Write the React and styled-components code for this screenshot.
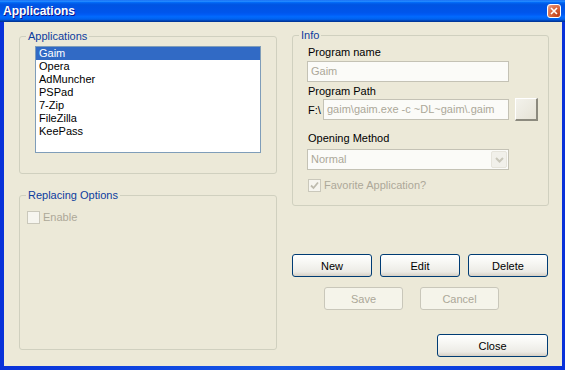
import React from "react"
import styled, { createGlobalStyle } from "styled-components"

const GlobalStyle = createGlobalStyle`
  html, body {
    margin: 0;
    padding: 0;
    background: #ECE9D8;
  }
  body {
    font-family: "Liberation Sans", Arial, sans-serif;
    font-size: 11px;
  }
  * { box-sizing: border-box; }
`

const Window = styled.div`
  width: 565px;
  height: 370px;
  display: flex;
  flex-direction: column;
  overflow: hidden;
`

const TitleBar = styled.div`
  height: 22px;
  flex: none;
  display: flex;
  align-items: center;
  justify-content: space-between;
  padding: 0 4px 0 3px;
  color: #fff;
  font-weight: bold;
  font-size: 12px;
  text-shadow: 1px 1px #0f1089;
  background: linear-gradient(to bottom, #0058ee 0%, #3593ff 4%, #288eff 6%, #127dff 8%, #036ffc 10%, #0262ee 14%, #0057e5 20%, #0054e3 24%, #0055eb 56%, #005bf5 66%, #026afe 76%, #0062ef 86%, #0052d6 92%, #0040ab 94%, #003092 100%);
`

const CloseButton = styled.div`
  width: 14px;
  height: 14px;
  border: 1px solid #fff;
  border-radius: 3px;
  display: flex;
  align-items: center;
  justify-content: center;
  background: radial-gradient(circle at 85% 85%, #c1401a 0%, #d9643a 50%, #e3876a 80%, #f3c2b0 100%);
`

const Frame = styled.div`
  flex: 1;
  display: flex;
  padding: 0 3px 4px 4px;
  background: linear-gradient(to right, #0831d9 0%, #1457e6 50%, #0831d9 100%);
`

const Client = styled.div`
  flex: 1;
  display: flex;
  gap: 15px;
  padding: 0 13px 0 15px;
  background: #ECE9D8;
`

const Column = styled.div`
  width: ${p => p.$w}px;
  padding-top: ${p => p.$top}px;
  display: flex;
  flex-direction: column;
`

const Group = styled.div`
  height: ${p => p.$h}px;
  margin-top: ${p => p.$mt || 0}px;
  border: 1px solid #D0D0BF;
  border-radius: 3px;
`

const Legend = styled.div`
  display: table;
  margin: -7px 0 -6px 6px;
  padding: 0 2px;
  line-height: 13px;
  background: #ECE9D8;
  color: #0D3C9E;
`

const GroupBody = styled.div`
  padding: ${p => p.$pad};
  display: flex;
  flex-direction: column;
  align-items: flex-start;
`

const ListBox = styled.div`
  width: 226px;
  height: 107px;
  border: 1px solid #7F9DB9;
  background: #fff;
`

const ListItem = styled.div`
  height: 13px;
  line-height: 13px;
  padding-left: 3px;
  color: ${p => (p.$selected ? "#fff" : "#000")};
  background: ${p => (p.$selected ? "#316AC5" : "transparent")};
`

const CheckRow = styled.div`
  display: flex;
  align-items: center;
  gap: 3px;
  height: 13px;
  line-height: 13px;
  margin-top: ${p => p.$mt || 0}px;
  margin-left: ${p => p.$ml || 0}px;
  color: #ACA899;
`

const CheckBox = styled.span`
  width: 13px;
  height: 13px;
  border: 1px solid #CAC8BB;
  background: #F6F5EF;
  display: flex;
  align-items: center;
  justify-content: center;
`

const Label = styled.div`
  line-height: 13px;
  margin-left: 1px;
  margin-top: ${p => p.$mt || 0}px;
  color: #000;
`

const TextBox = styled.div`
  width: ${p => p.$w}px;
  height: 21px;
  margin-top: ${p => p.$mt || 0}px;
  border: 1px solid #C4C2B5;
  background: #FBFBF8;
  color: #ACA899;
  line-height: 19px;
  padding-left: 3px;
  white-space: nowrap;
  overflow: hidden;
`

const PathRow = styled.div`
  display: flex;
  align-items: center;
  height: 23px;
`

const Prefix = styled.span`
  width: 15px;
  margin-left: 1px;
  color: #000;
`

const BrowseButton = styled.div`
  width: 23px;
  height: 23px;
  margin-left: 6px;
  border-style: solid;
  border-width: 1px 2px 2px 1px;
  border-color: #fff #8C8A7E #8C8A7E #fff;
  background: linear-gradient(135deg, #F3F2EC 0%, #E6E3D6 100%);
`

const Combo = styled.div`
  width: 202px;
  height: 21px;
  margin-top: ${p => p.$mt || 0}px;
  border: 1px solid #C4C2B5;
  background: #FBFBF8;
  display: flex;
  justify-content: space-between;
  color: #ACA899;
  line-height: 19px;
  padding: 0 1px 0 3px;
`

const ComboArrow = styled.span`
  width: 16px;
  height: 17px;
  margin-top: 1px;
  border: 1px solid #E6E4DB;
  border-radius: 2px;
  background: #F1F0EA;
  display: flex;
  align-items: center;
  justify-content: center;
`

const ButtonRow = styled.div`
  display: flex;
  gap: ${p => p.$gap}px;
  margin-top: ${p => p.$mt}px;
  padding-left: ${p => p.$pl || 0}px;
  justify-content: ${p => (p.$end ? "flex-end" : "flex-start")};
  margin-right: ${p => (p.$end ? 1 : 0)}px;
`

const Button = styled.button`
  width: ${p => p.$w}px;
  height: 23px;
  padding: 0;
  font-family: "Liberation Sans", Arial, sans-serif;
  font-size: 11px;
  border-radius: 3px;
  border: 1px solid ${p => (p.disabled ? "#C9C7BA" : "#003C74")};
  color: ${p => (p.disabled ? "#ACA899" : "#000")};
  background: ${p =>
    p.disabled
      ? "#F5F4EA"
      : "linear-gradient(to bottom, #FFFFFF 0%, #F6F6F2 40%, #ECEBE6 80%, #D6D0C5 100%)"};
`

const apps = ["Gaim", "Opera", "AdMuncher", "PSPad", "7-Zip", "FileZilla", "KeePass"]

export default function App() {
  return (
    <>
      <GlobalStyle />
      <Window>
        <TitleBar>
          <span>Applications</span>
          <CloseButton>
            <svg width="8" height="8" viewBox="0 0 8 8">
              <path d="M1 1 L7 7 M7 1 L1 7" stroke="#fff" strokeWidth="1.6" />
            </svg>
          </CloseButton>
        </TitleBar>
        <Frame>
          <Client>
            <Column $w={258} $top={14}>
              <Group $h={138}>
                <Legend>Applications</Legend>
                <GroupBody $pad="9px 0 0 15px">
                  <ListBox>
                    {apps.map((name, i) => (
                      <ListItem key={name} $selected={i === 0}>{name}</ListItem>
                    ))}
                  </ListBox>
                </GroupBody>
              </Group>
              <Group $h={155} $mt={21}>
                <Legend>Replacing Options</Legend>
                <GroupBody $pad="15px 0 0 7px">
                  <CheckRow>
                    <CheckBox />
                    Enable
                  </CheckRow>
                </GroupBody>
              </Group>
            </Column>
            <Column $w={257} $top={13}>
              <Group $h={171}>
                <Legend>Info</Legend>
                <GroupBody $pad="10px 0 0 14px">
                  <Label>Program name</Label>
                  <TextBox $w={202} $mt={2}>Gaim</TextBox>
                  <Label $mt={3}>Program Path</Label>
                  <PathRow>
                    <Prefix>F:\</Prefix>
                    <TextBox $w={186}>gaim\gaim.exe -c ~DL~gaim\.gaim</TextBox>
                    <BrowseButton />
                  </PathRow>
                  <Label $mt={11}>Opening Method</Label>
                  <Combo $mt={4}>
                    Normal
                    <ComboArrow>
                      <svg width="9" height="6" viewBox="0 0 9 6">
                        <path d="M1 1 L4.5 4.5 L8 1" stroke="#C9C7BA" strokeWidth="2" fill="none" />
                      </svg>
                    </ComboArrow>
                  </Combo>
                  <CheckRow $mt={9} $ml={1}>
                    <CheckBox>
                      <svg width="9" height="9" viewBox="0 0 9 9">
                        <path d="M1 4.5 L3.5 7 L8 1.5" stroke="#BEBBAE" strokeWidth="1.8" fill="none" />
                      </svg>
                    </CheckBox>
                    Favorite Application?
                  </CheckRow>
                </GroupBody>
              </Group>
              <ButtonRow $gap={8} $mt={48}>
                <Button $w={80}>New</Button>
                <Button $w={80}>Edit</Button>
                <Button $w={80}>Delete</Button>
              </ButtonRow>
              <ButtonRow $gap={17} $mt={10} $pl={32}>
                <Button $w={79} disabled>Save</Button>
                <Button $w={79} disabled>Cancel</Button>
              </ButtonRow>
              <ButtonRow $gap={0} $mt={24} $end>
                <Button $w={111}>Close</Button>
              </ButtonRow>
            </Column>
          </Client>
        </Frame>
      </Window>
    </>
  )
}
